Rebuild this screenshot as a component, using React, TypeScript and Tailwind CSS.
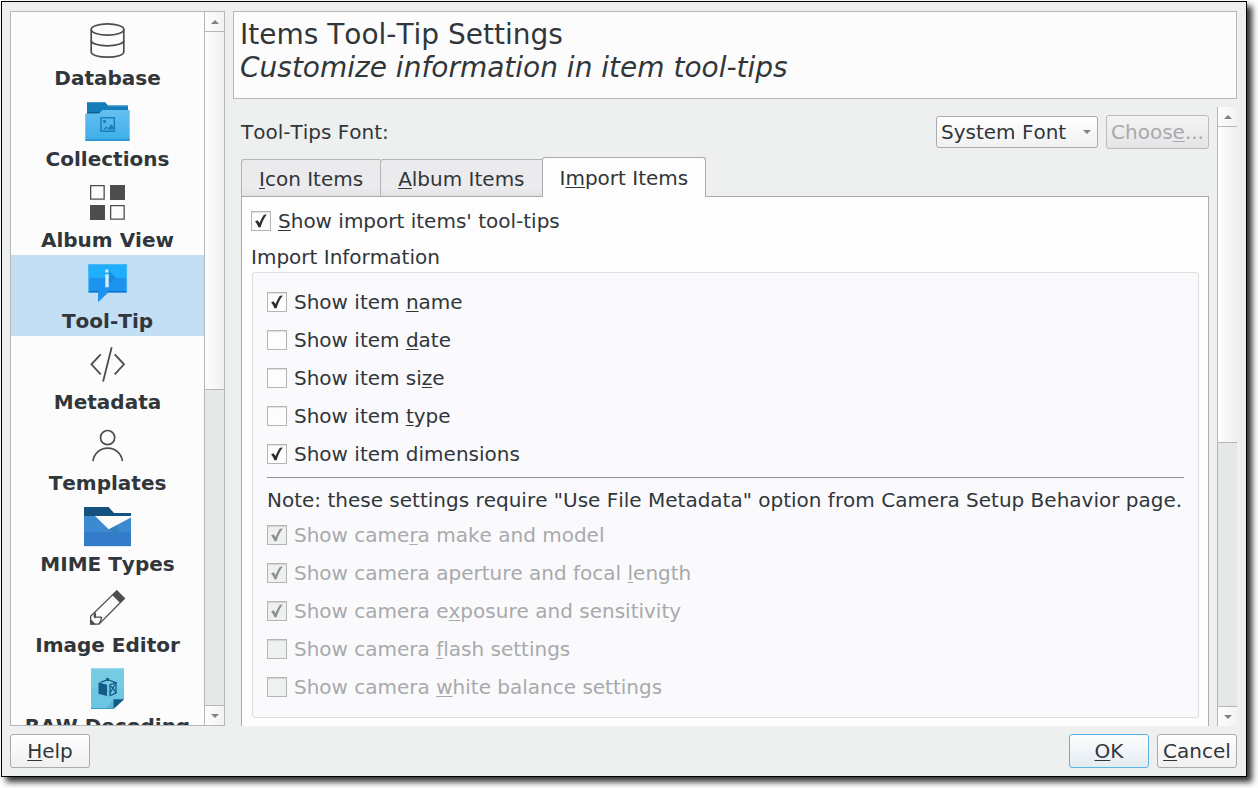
import { useState, type ReactNode } from "react";

const ink = "#4d4d4f";

function DatabaseIcon() {
  return (
    <svg viewBox="0 0 49 48" className="h-12 w-[49px] shrink-0" fill="none" stroke={ink} strokeWidth="1.7" aria-hidden="true">
      <ellipse cx="24.5" cy="12.5" rx="16.3" ry="5.6" />
      <path d="M8.2 12.5V35c0 3 7.3 5.2 16.3 5.2S40.8 38 40.8 35V12.5" />
      <path d="M8.2 23.4c0 3.1 7.3 5.4 16.3 5.4s16.3-2.3 16.3-5.4" />
    </svg>
  );
}

function CollectionsIcon() {
  return (
    <svg viewBox="0 0 49 48" className="h-12 w-[49px] shrink-0" aria-hidden="true">
      <defs>
        <linearGradient id="folderFront" x1="0" y1="0" x2="0" y2="1">
          <stop offset="0" stopColor="#66bff0" />
          <stop offset="1" stopColor="#3daee9" />
        </linearGradient>
      </defs>
      <path d="M4 4h18l3 3.5h20V20H4z" fill="#147cb9" />
      <path d="M4 4h18v1H4zM25 7.500h20v.9H25z" fill="#3f9cd0" />
      <path d="M4 14h14v1.500H4z" fill="#0d5d8f" />
      <path d="M2.300 15.500H16L19.500 12h27.200v31H2.300z" fill="url(#folderFront)" />
      <path d="M2.300 41.400h44.400v1H2.300z" fill="#1f86c4" />
      <path d="M18 19.700h13.300v13.600H18z" fill="none" stroke="#1b7fbe" strokeWidth="1.500" />
      <circle cx="21.600" cy="23.400" r="1.600" fill="#1b7fbe" />
      <path d="M20 31.500l3.500-3.300 1.200 1L22.500 31.500zM24 31.500l4.300-5.200 3 3.500v1.700z" fill="#1b7fbe" />
    </svg>
  );
}

function AlbumViewIcon() {
  return (
    <svg viewBox="0 0 49 48" className="h-12 w-[49px] shrink-0" aria-hidden="true">
      <path d="M27 6h15v15H27zM7 26h15v15H7z" fill={ink} />
      <path d="M7.650 6.650h13.500v13.500H7.650zM27.650 26.650h13.500v13.500h-13.500z" fill="none" stroke={ink} strokeWidth="1.300" />
    </svg>
  );
}

function ToolTipIcon() {
  return (
    <svg viewBox="0 0 49 48" className="h-12 w-[49px] shrink-0" aria-hidden="true">
      <path d="M5.300 4.300H44v28.400H25L15 42.300v-9.600H5.300z" fill="#1d93f0" />
      <path d="M5.300 4.300H44V18H5.300z" fill="#1eaefb" />
      <path d="M26 10.500l7 7.500-5 4.500h-2.500z" fill="#1783d6" opacity=".75" />
      <path d="M5.300 31.600H15M25 31.600h19" stroke="#1469b5" strokeWidth="1" />
      <path d="M5.600 4.600h38.100v27.700" fill="none" stroke="#5fc2f5" strokeWidth=".7" />
      <path d="M5.600 4.600v27.700" fill="none" stroke="#5fc2f5" strokeWidth=".7" />
      <path d="M22.300 9.600h3.100v2.900h-3.100zM22.300 14.300h3.400v13h-3.400z" fill="#d5effc" />
    </svg>
  );
}

function MetadataIcon() {
  return (
    <svg viewBox="0 0 49 48" className="h-12 w-[49px] shrink-0" fill="none" stroke={ink} strokeWidth="1.800" aria-hidden="true">
      <path d="M17.700 13.300l-9.300 10 9.300 10M31.700 13.300l9.300 10-9.300 10M28.700 6.300l-8.600 34.200" />
    </svg>
  );
}

function TemplatesIcon() {
  return (
    <svg viewBox="0 0 49 48" className="h-12 w-[49px] shrink-0" fill="none" stroke={ink} strokeWidth="1.700" aria-hidden="true">
      <circle cx="24.600" cy="15.600" r="7.100" />
      <path d="M10 39.200c.8-7.500 6.900-13 14.700-13s13.900 5.500 14.700 13" />
    </svg>
  );
}

function MimeIcon() {
  return (
    <svg viewBox="0 0 49 48" className="h-12 w-[49px] shrink-0" aria-hidden="true">
      <path d="M1 4h24.500l5.500 6h17v6H1z" fill="#15527f" />
      <path d="M1 13h47v30H1z" fill="#3c8bd2" />
      <path d="M1 29h47v14H1z" fill="#347bc9" />
      <path d="M25.700 26.300L34 23l3 5-7 1z" fill="#3480bd" />
      <path d="M12 13h36v1.500L25.700 26.300z" fill="#fcfcfc" />
      <path d="M1 43h47v1H1z" fill="#dfe6ea" />
    </svg>
  );
}

function EditorIcon() {
  return (
    <svg viewBox="0 0 49 48" className="h-12 w-[49px] shrink-0" fill="none" stroke={ink} strokeWidth="1.300" aria-hidden="true">
      <path d="M33.700 6.800l7.700 7.700L16 40.100H7.600v-7.800z" />
      <path d="M33.700 6.500l8 8-4.600 4.600-8-8z" fill={ink} stroke="none" />
      <path d="M12.300 28.500l.2 4.500 6 .3-.6 3.200-2 3.300M11.500 29.500l-.2 3.500 1.500.8" />
      <path d="M7.200 34.500l5.800 6H7.200z" fill={ink} stroke="none" />
    </svg>
  );
}

function RawIcon() {
  return (
    <svg viewBox="0 0 49 48" className="h-12 w-[49px] shrink-0" aria-hidden="true">
      <path d="M8 3.300h33v31L30.500 44H8z" fill="#76cbe3" />
      <path d="M8 24h33v10.300L30.500 44H8z" fill="#6cc6e1" />
      <path d="M8 3.300h33v1H8z" fill="#98dcec" />
      <path d="M8 43h22.500v1H8z" fill="#3b9dc4" />
      <path d="M30.500 34.300L23 43h7.500z" fill="#4fa9cb" opacity=".6" />
      <path d="M30.500 34.300H41L30.500 44z" fill="#155a87" />
      <g fill="#155a87">
        <path d="M15.500 17.500l8.500 2.200v11.400l-8.500-2.300z" />
        <path d="M23.200 13h2.800v3h-2.800z" />
      </g>
      <g fill="none" stroke="#155a87" strokeWidth="1.300">
        <path d="M27 19.800l6-2.300v10.600l-6 2.400z" />
        <path d="M33 17.500l-3 5.500 3 5M27 21l3 2-3 5M17.500 17.300l6-2.200M26 15l6 2.300" />
      </g>
    </svg>
  );
}

const pages: { label: string; icon: ReactNode }[] = [
  { label: "Database", icon: <DatabaseIcon /> },
  { label: "Collections", icon: <CollectionsIcon /> },
  { label: "Album View", icon: <AlbumViewIcon /> },
  { label: "Tool-Tip", icon: <ToolTipIcon /> },
  { label: "Metadata", icon: <MetadataIcon /> },
  { label: "Templates", icon: <TemplatesIcon /> },
  { label: "MIME Types", icon: <MimeIcon /> },
  { label: "Image Editor", icon: <EditorIcon /> },
  { label: "RAW Decoding", icon: <RawIcon /> },
];

/** Renders a caption; the character after "&" is the underlined access key. */
function Caption({ text }: { text: string }) {
  const at = text.indexOf("&");
  if (at < 0) return <span>{text}</span>;
  return (
    <span>
      {text.slice(0, at)}
      <span className="underline decoration-1 underline-offset-2">{text[at + 1]}</span>
      {text.slice(at + 2)}
    </span>
  );
}

function Arrow({ up = false }: { up?: boolean }) {
  return (
    <svg viewBox="0 0 8 4" className="h-1 w-2" fill="#7f8386" aria-hidden="true">
      <path d={up ? "M4 0l4 4H0z" : "M0 0h8L4 4z"} />
    </svg>
  );
}

function ScrollBar({ size, name }: { size: number; name: string }) {
  return (
    <div className="flex w-5 shrink-0 flex-col border-l border-[#b6b7b8] bg-[#e6e8e7]">
      <button
        type="button"
        aria-label={`Scroll ${name} up`}
        className="flex h-5 shrink-0 items-center justify-center border-b border-[#b6b7b8] bg-linear-to-r from-[#fdfdfd] to-[#f3f3f3]"
      >
        <Arrow up />
      </button>
      <div className="min-h-0 flex-1">
        <div className="border-b border-[#b6b7b8] bg-linear-to-r from-[#fefefe] to-[#f0f0f0]" style={{ height: `${size}%` }} />
      </div>
      <button
        type="button"
        aria-label={`Scroll ${name} down`}
        className="flex h-5 shrink-0 items-center justify-center border-t border-[#b6b7b8] bg-linear-to-r from-[#fdfdfd] to-[#f3f3f3]"
      >
        <Arrow />
      </button>
    </div>
  );
}

function Option({ text, on = false, disabled = false }: { text: string; on?: boolean; disabled?: boolean }) {
  const [checked, setChecked] = useState(on);
  return (
    <label className={disabled ? "flex items-center gap-[7px] text-[#a8a9ab]" : "flex items-center gap-[7px]"}>
      <span className="grid size-5 shrink-0">
        <input
          type="checkbox"
          checked={checked}
          disabled={disabled}
          onChange={(e) => setChecked(e.target.checked)}
          className="peer col-start-1 row-start-1 size-5 appearance-none border border-[#b4b5b6] bg-[#fdfdfd] shadow-[inset_0_1px_1px_rgba(0,0,0,0.12)] disabled:bg-[#eff0f0]"
        />
        <svg
          viewBox="0 0 20 20"
          className="pointer-events-none invisible col-start-1 row-start-1 size-5 fill-[#2a2e32] peer-checked:visible peer-disabled:fill-[#8f9193]"
          aria-hidden="true"
        >
          <path d="M4 10.600l2.500-1.300 2.100 2.700c1.400-3.400 2.700-6 4.300-8.200l2.900-.2c-2.700 3.700-4.600 7.600-6.200 12.600H7.400C6.500 14 5.500 12.200 4 10.600z" />
        </svg>
      </span>
      <Caption text={text} />
    </label>
  );
}

const buttonBase = "h-[34px] rounded-[3px] border bg-linear-to-b";

export default function App() {
  const [page, setPage] = useState("Tool-Tip");

  return (
    <div className="flex h-screen min-h-[480px] bg-[#fdfdfd] pt-px pr-[11px] pb-[11px] pl-px font-['DejaVu_Sans',sans-serif] text-[20px] leading-6 text-[#31363b] [font-kerning:none] [font-variant-ligatures:none]">
      <div className="flex min-w-0 flex-1 flex-col gap-2 border border-black bg-[#eef0ef] pt-[9px] pr-[9px] pb-2 pl-2 shadow-[5px_5px_6px_rgba(0,0,0,0.8)]">
        <div className="flex min-h-0 flex-1 gap-2">
          <nav aria-label="Settings pages" className="flex w-[215px] shrink-0 border border-[#b6b7b8] bg-[#fcfcfc]">
            <ul className="min-w-0 flex-1 overflow-hidden">
              {pages.map((p) => (
                <li key={p.label}>
                  <button
                    type="button"
                    onClick={() => setPage(p.label)}
                    className={
                      p.label === page
                        ? "flex w-full flex-col items-center gap-px bg-[#c2dff5] pt-[5px] pb-[3px] font-bold"
                        : "flex w-full flex-col items-center gap-px pt-[5px] pb-[3px] font-bold"
                    }
                  >
                    {p.icon}
                    <span className="whitespace-nowrap">{p.label}</span>
                  </button>
                </li>
              ))}
            </ul>
            <ScrollBar size={53.2} name="pages" />
          </nav>

          <main className="flex min-w-0 flex-1 flex-col gap-2">
            <header className="border border-[#b6b7b8] bg-[#fcfcfc] px-1.5 pt-1.5 pb-3.5 text-[28px] leading-[33px]">
              <h1>Items Tool-Tip Settings</h1>
              <p className="italic">Customize information in item tool-tips</p>
            </header>

            <div className="flex min-h-0 flex-1 gap-2">
              <div className="min-w-0 flex-1 overflow-hidden pt-2 pl-2">
                <div className="flex items-center gap-2">
                  <label htmlFor="font" className="flex-1">
                    Tool-Tips Font:
                  </label>
                  <div className="grid w-[162px] items-center">
                    <select
                      id="font"
                      className="col-start-1 row-start-1 h-8 appearance-none rounded-[3px] border border-[#a9abac] bg-linear-to-b from-[#fefefe] to-[#f1f1f1] pl-1 [font-kerning:none]"
                    >
                      <option>System Font</option>
                      <option>Custom Font</option>
                    </select>
                    <span className="pointer-events-none col-start-1 row-start-1 mr-[7px] justify-self-end">
                      <Arrow />
                    </span>
                  </div>
                  <button
                    type="button"
                    disabled
                    className={`${buttonBase} w-[103px] border-[#b9babb] from-[#f4f4f5] to-[#e5e5e7] text-[#a8a9ab]`}
                  >
                    <Caption text="Choos&e..." />
                  </button>
                </div>

                <div role="tablist" className="mt-2 flex items-end">
                  <button
                    type="button"
                    role="tab"
                    aria-selected="false"
                    className="h-[37px] rounded-tl-[3px] border-t border-l border-[#b4b5b6] bg-linear-to-b from-[#ebebed] from-80% to-[#e2e2e4] px-[17px] pt-0.5"
                  >
                    <Caption text="&Icon Items" />
                  </button>
                  <button
                    type="button"
                    role="tab"
                    aria-selected="false"
                    className="h-[37px] rounded-tl-[3px] border-t border-l border-[#b4b5b6] bg-linear-to-b from-[#ebebed] from-80% to-[#e2e2e4] px-[17px] pt-0.5"
                  >
                    <Caption text="&Album Items" />
                  </button>
                  <button
                    type="button"
                    role="tab"
                    aria-selected="true"
                    className="z-10 -mb-px h-10 rounded-t-[3px] border-x border-t border-[#a9abac] bg-[#fdfdfd] px-[17px]"
                  >
                    <Caption text="I&mport Items" />
                  </button>
                </div>

                <div role="tabpanel" className="flex flex-col border border-[#a9abac] bg-[#fdfdfd] px-[9px] pt-3 pb-6">
                  <Option text="&Show import items' tool-tips" on />
                  <section className="pt-3">
                    <h2>Import Information</h2>
                    <div className="mt-[3px] ml-px flex flex-col rounded-[3px] border border-[#dedfe0] bg-[#fafafc] px-3.5 pt-[17px] pb-[18px]">
                      <div className="flex flex-col gap-3.5">
                        <Option text="Show item &name" on />
                        <Option text="Show item &date" />
                        <Option text="Show item si&ze" />
                        <Option text="Show item &type" />
                        <Option text="Show item dimensions" on />
                      </div>
                      <hr className="mt-[11px] border-[#8f9193]" />
                      <p className="mt-2.5 mb-[11px]">
                        Note: these settings require "Use File Metadata" option from Camera Setup Behavior page.
                      </p>
                      <div className="flex flex-col gap-3.5">
                        <Option text="Show came&ra make and model" on disabled />
                        <Option text="Show camera aperture and focal &length" on disabled />
                        <Option text="Show camera e&xposure and sensitivity" on disabled />
                        <Option text="Show camera &flash settings" disabled />
                        <Option text="Show camera &white balance settings" disabled />
                      </div>
                    </div>
                  </section>
                </div>
              </div>
              <ScrollBar size={54.6} name="options" />
            </div>
          </main>
        </div>

        <footer className="flex gap-2">
          <button type="button" className={`${buttonBase} mr-auto w-20 border-[#a9abac] from-[#fefefe] to-[#f0f0f0]`}>
            <Caption text="&Help" />
          </button>
          <button type="button" className={`${buttonBase} w-20 border-[#5cb4e6] from-[#fdfefe] to-[#e3ebf2]`}>
            <Caption text="&OK" />
          </button>
          <button type="button" className={`${buttonBase} w-20 border-[#a9abac] from-[#fefefe] to-[#f0f0f0]`}>
            <Caption text="&Cancel" />
          </button>
        </footer>
      </div>
    </div>
  );
}
